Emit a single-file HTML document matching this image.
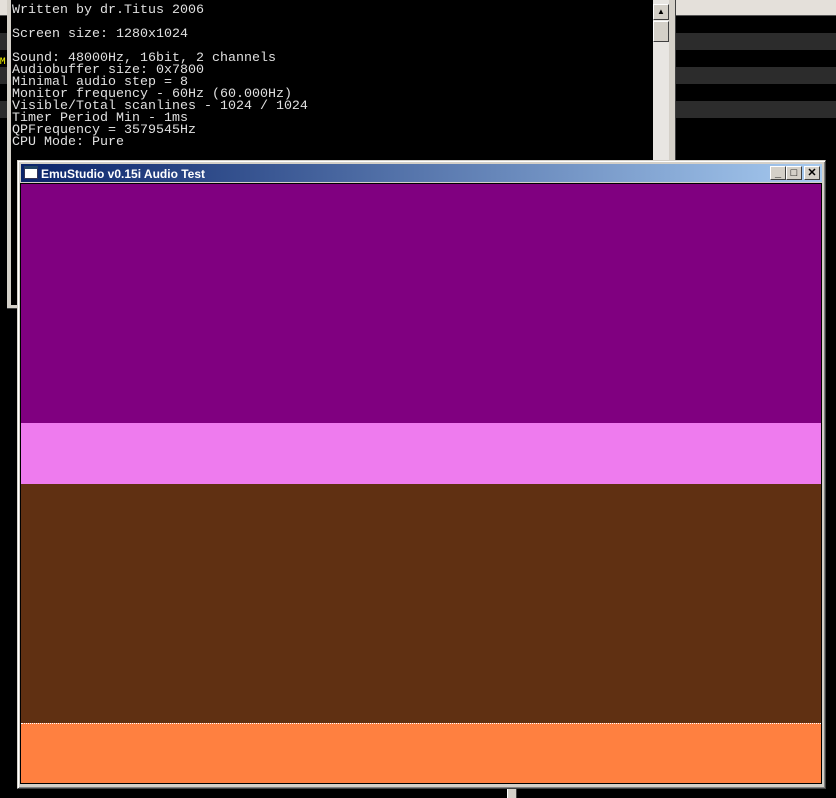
<!DOCTYPE html>
<html><head><style>
body{margin:0;width:836px;height:798px;background:#000;position:relative;overflow:hidden;font-family:"Liberation Sans",sans-serif}
div{position:absolute;box-sizing:border-box}
.con{left:12px;top:5px;font:13.33px/12px "Liberation Mono",monospace;color:#e0e0e0;white-space:pre}
.btn{background:#d4d0c8;border:1px solid;border-color:#fff #404040 #404040 #fff;width:16px;height:14px;top:2px;font:bold 11px/12px "Liberation Sans",sans-serif;text-align:center;color:#000}
</style></head><body>
<div style="left:0;top:0;width:836px;height:15px;background:#e4e0da"></div>
<div style="left:0;top:15px;width:836px;height:1px;background:#555"></div>
<div style="left:0;top:33px;width:836px;height:17px;background:#2c2c2c"></div>
<div style="left:0;top:67px;width:836px;height:17px;background:#2c2c2c"></div>
<div style="left:0;top:101px;width:836px;height:17px;background:#2c2c2c"></div>
<div style="left:0;top:57px;color:#ff0;font:9px monospace">M</div>
<!-- console window -->
<div style="left:7px;top:-4px;width:669px;height:313px;background:#d4d0c8;border-right:1px solid #404040;border-bottom:1px solid #404040"></div>
<div style="left:11px;top:0;width:642px;height:305px;background:#000"></div>
<div style="left:653px;top:0;width:16px;height:305px;background:#e8e6e2"></div>
<div class="btn" style="left:653px;top:4px;height:16px;font-size:8px;line-height:14px">▲</div>
<div class="btn" style="left:653px;top:21px;height:21px"></div>
<div class="con">Written by dr.Titus 2006

Screen size: 1280x1024

Sound: 48000Hz, 16bit, 2 channels
Audiobuffer size: 0x7800
Minimal audio step = 8
Monitor frequency - 60Hz (60.000Hz)
Visible/Total scanlines - 1024 / 1024
Timer Period Min - 1ms
QPFrequency = 3579545Hz
CPU Mode: Pure</div>
<div style="left:507px;top:780px;width:10px;height:18px;background:#d4d0c8;border-left:1px solid #fff;border-right:1px solid #404040"></div>
<!-- emu window -->
<div style="left:17px;top:160px;width:809px;height:629px;background:#d4d0c8;border:1px solid;border-color:#d4d0c8 #404040 #404040 #d4d0c8;box-shadow:inset 1px 1px #fff,inset -1px -1px #808080"></div>
<div style="left:21px;top:164px;width:801px;height:18px;background:linear-gradient(90deg,#0a246a,#a6caf0)"></div>
<div style="left:24px;top:166px;width:14px;height:13px;background:#fff;border:1px solid #335;border-top:3px solid #246"></div>
<div style="left:41px;top:166px;color:#fff;font:bold 12px/16px 'Liberation Sans',sans-serif">EmuStudio v0.15i Audio Test</div>
<div class="btn" style="left:770px;top:166px">_</div>
<div class="btn" style="left:786px;top:166px">□</div>
<div class="btn" style="left:804px;top:166px">✕</div>
<div style="left:20px;top:183px;width:802px;height:601px;background:#000"></div>
<div style="left:21px;top:184px;width:800px;height:239px;background:#800080"></div>
<div style="left:21px;top:423px;width:800px;height:61px;background:#ee7bee"></div>
<div style="left:21px;top:484px;width:800px;height:239px;background:#603012"></div>
<div style="left:21px;top:723px;width:800px;height:60px;background:#ff8040;border-top:1px dotted #fff"></div>
</body></html>
